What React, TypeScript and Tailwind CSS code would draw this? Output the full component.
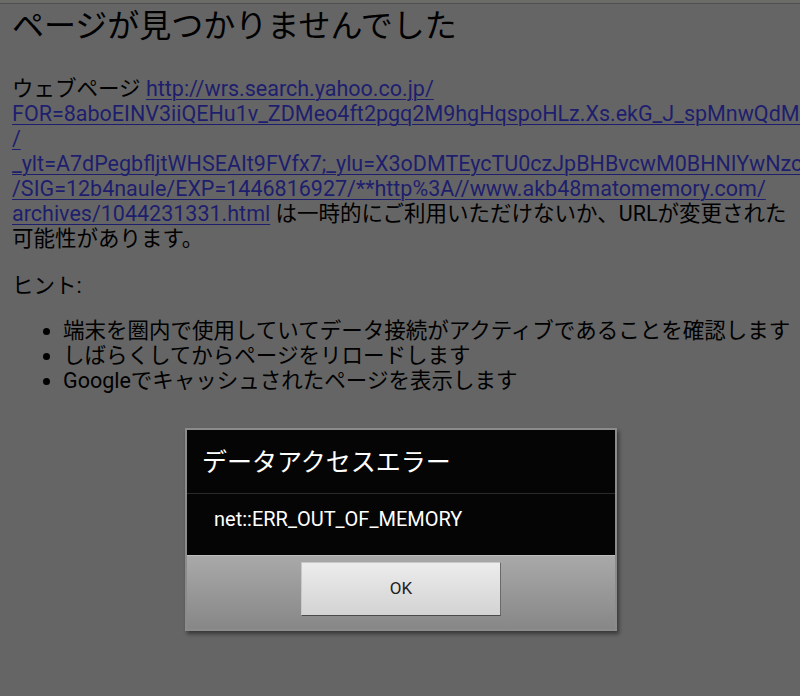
import React from "react";

export default function App() {
  const link = "text-[#1e1e6e] underline decoration-1 underline-offset-[3px]";
  return (
    <div className="relative w-[800px] h-[696px] overflow-hidden bg-[#656565] font-[Roboto,'Noto_Sans_CJK_JP',sans-serif] text-black">
      <div className="h-[3px] bg-[#6b6b68]" />
      <div className="h-[1px] bg-[#505050]" />
      <div className="px-[12px]">
        <h1 className="text-[32px] leading-[40px] pt-[2px] font-normal">ページが見つかりませんでした</h1>
        <div className="mt-[30px] text-[21.5px] leading-[25px]">
          <div className="whitespace-nowrap">
            ウェブページ <span className={link}>http://wrs.search.yahoo.co.jp/</span>
          </div>
          <div className="whitespace-nowrap">
            <span className={link}>FOR=8aboEINV3iiQEHu1v_ZDMeo4ft2pgq2M9hgHqspoHLz.Xs.ekG_J_spMnwQdMzxKqBbQ</span>
          </div>
          <div className="whitespace-nowrap">
            <span className={link}>/</span>
          </div>
          <div className="whitespace-nowrap">
            <span className={link}>_ylt=A7dPegbfljtWHSEAIt9FVfx7;_ylu=X3oDMTEycTU0czJpBHBvcwM0BHNlYwNzcgRzbGsDdGl0bGU-</span>
          </div>
          <div className="whitespace-nowrap">
            <span className={link}>/SIG=12b4naule/EXP=1446816927/**http%3A//www.akb48matomemory.com/</span>
          </div>
          <div className="whitespace-nowrap">
            <span className={link}>archives/1044231331.html</span> は一時的にご利用いただけないか、URLが変更された
          </div>
          <div className="whitespace-nowrap">可能性があります。</div>
        </div>
        <div className="mt-[22px] text-[21.5px] leading-[25px]">ヒント:</div>
        <ul className="mt-[20px] text-[21.5px] leading-[25px] list-disc pl-[51px] whitespace-nowrap">
          <li>端末を圏内で使用していてデータ接続がアクティブであることを確認します</li>
          <li>しばらくしてからページをリロードします</li>
          <li>Googleでキャッシュされたページを表示します</li>
        </ul>
      </div>

      <div className="absolute left-[185px] top-[428px] w-[432px] border-2 border-[#8c8c8c] shadow-[2px_3px_4px_rgba(0,0,0,0.45)]">
        <div className="bg-[#050505]">
          <div className="h-[64px] flex items-center pl-[15px] pt-[2px] text-[25px] text-white border-b border-[#2a2a2a]">
            データアクセスエラー
          </div>
          <div className="h-[61px] pl-[27px] pt-[13px] text-[20px] leading-[24px] text-white">
            net::ERR_OUT_OF_MEMORY
          </div>
        </div>
        <div className="h-[74px] bg-gradient-to-b from-[#a9a9a9] to-[#878787] border-t border-[#bdbdbd] flex justify-center pt-[6px]">
          <div className="w-[200px] h-[54px] bg-gradient-to-b from-[#ececec] to-[#d3d3d3] border border-[#c8c8c8] border-b-[#4a4a4a] border-r-[#6a6a6a] flex items-center justify-center text-[17px] text-[#222]">
            OK
          </div>
        </div>
      </div>
    </div>
  );
}
